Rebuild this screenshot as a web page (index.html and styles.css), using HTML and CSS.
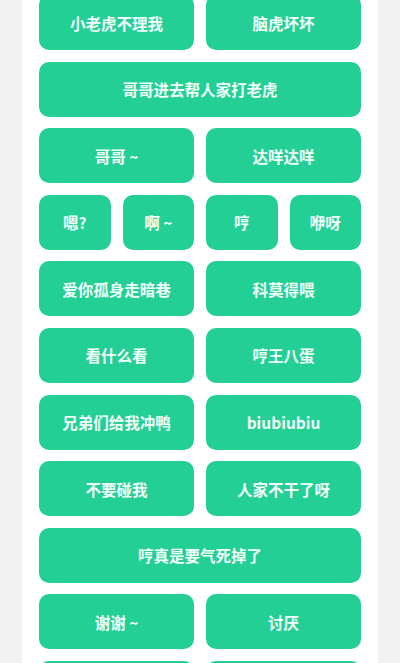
FILE: index.html
```html
<!DOCTYPE html>
<html lang="zh">
<head>
<meta charset="utf-8">
<link rel="stylesheet" href="styles.css">
</head>
<body>
<div class="panel">
  <div class="grid">
    <div class="btn half">小老虎不理我</div>
    <div class="btn half">脑虎坏坏</div>
    <div class="btn full">哥哥进去帮人家打老虎</div>
    <div class="btn half">哥哥 ~</div>
    <div class="btn half">达咩达咩</div>
    <div class="btn">嗯?</div>
    <div class="btn">啊 ~</div>
    <div class="btn">哼</div>
    <div class="btn">咿呀</div>
    <div class="btn half">爱你孤身走暗巷</div>
    <div class="btn half">科莫得喂</div>
    <div class="btn half">看什么看</div>
    <div class="btn half">哼王八蛋</div>
    <div class="btn half">兄弟们给我冲鸭</div>
    <div class="btn half">biubiubiu</div>
    <div class="btn half">不要碰我</div>
    <div class="btn half">人家不干了呀</div>
    <div class="btn full">哼真是要气死掉了</div>
    <div class="btn half">谢谢 ~</div>
    <div class="btn half">讨厌</div>
    <div class="btn half"></div>
    <div class="btn half"></div>
  </div>
</div>
</body>
</html>
```
FILE: styles.css
```css
html, body {
  margin: 0;
  padding: 0;
  height: 100%;
  overflow: hidden;
}
body {
  background: #f1f1f1;
  font-family: "Noto Sans CJK SC", "Noto Sans", sans-serif;
}
.panel {
  width: 322px;
  margin: 0 auto;
  padding: 0 17px;
  background: #ffffff;
  height: 100%;
  overflow: hidden;
}
.grid {
  margin-top: -5px;
  display: grid;
  grid-template-columns: repeat(4, 1fr);
  grid-auto-rows: 55px;
  column-gap: 12px;
  row-gap: 11.6px;
}
.btn {
  background: #24cf96;
  border-radius: 10px;
  color: #f2fff9;
  font-size: 15.5px;
  font-weight: 700;
  display: flex;
  align-items: center;
  justify-content: center;
}
.half { grid-column: span 2; }
.full { grid-column: span 4; }
```
